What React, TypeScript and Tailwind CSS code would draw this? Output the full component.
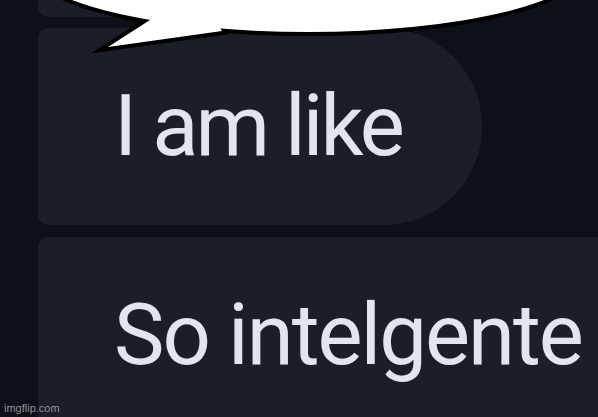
import React from 'react';

const SpeechBubble: React.FC = () => (
  <svg
    className="absolute left-0 top-0"
    width="598"
    height="70"
    viewBox="0 0 598 70"
  >
    <g stroke="#000" strokeWidth="8" strokeLinejoin="miter" strokeMiterlimit="10" fill="#fff">
      <ellipse cx="308" cy="-36" rx="278" ry="68" />
      <polygon points="150,20 108,47 222,31 210,10" />
    </g>
    <g fill="#fff">
      <ellipse cx="308" cy="-36" rx="278" ry="68" />
      <polygon points="150,20 108,47 222,31 210,10" />
    </g>
  </svg>
);

const App: React.FC = () => {
  return (
    <div
      className="relative w-[598px] h-[417px] overflow-hidden bg-[#0d1117]"
      style={{ fontFamily: 'Roboto, "Noto Sans", sans-serif' }}
    >
      <div className="flex flex-col gap-[11px] pl-[38px]">
        <div className="h-[17px] w-[420px] rounded-bl-[10px] bg-[#1b1e26]" />
        <div className="flex h-[197px] w-[444px] items-center rounded-l-[10px] rounded-r-[98px] bg-[#1b1e26] pl-[76px]">
          <span className="text-[85px] leading-none tracking-[-3px] text-[#e1e5ec]">I am like</span>
        </div>
        <div className="mt-px h-[200px] w-[600px] rounded-tl-[10px] bg-[#1b1e26] pl-[76px] pt-[56px]">
          <span className="whitespace-nowrap text-[85px] leading-none tracking-[-2px] text-[#e1e5ec]">So intelgente</span>
        </div>
      </div>
      <SpeechBubble />
      <div
        className="absolute bottom-[3px] left-[4px] text-[11px] leading-none text-[#b4b6ba]/80"
        style={{ fontFamily: '"Liberation Sans", Arial, sans-serif' }}
      >
        imgflip.com
      </div>
    </div>
  );
};

export default App;
